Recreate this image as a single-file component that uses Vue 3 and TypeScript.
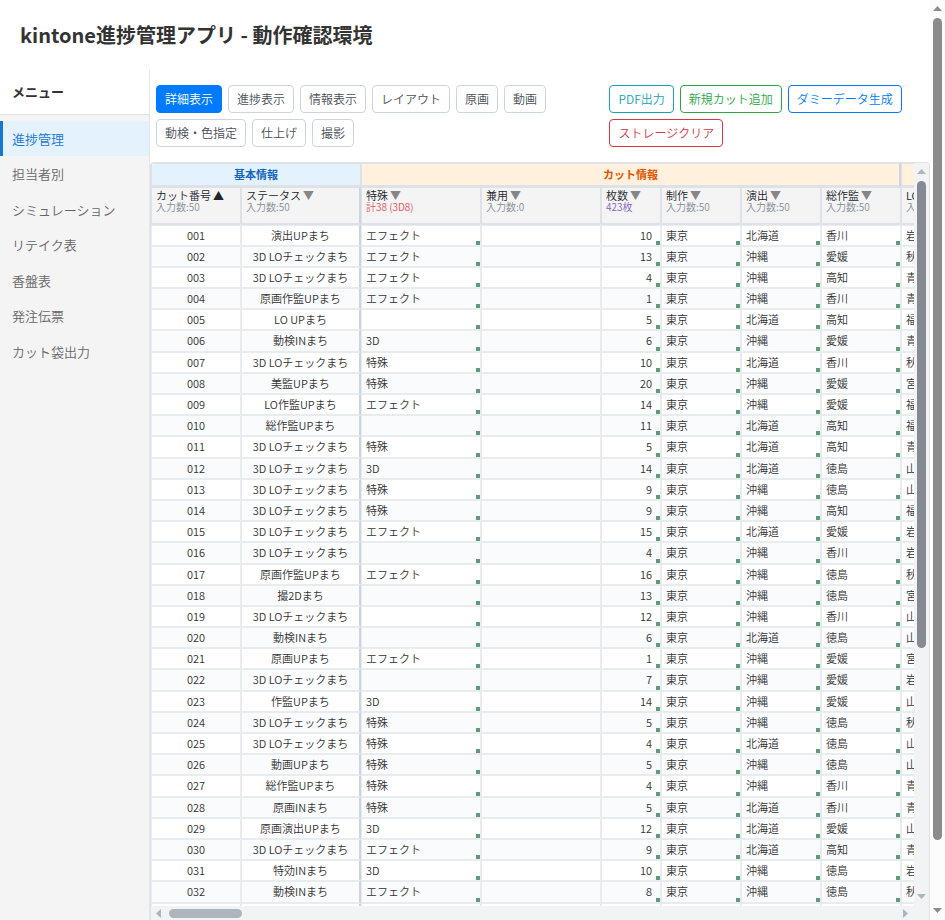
<script setup lang="ts">
import { ref } from 'vue'

interface Column {
  label: string
  note: string
  tone?: 'red' | 'purple'
  width: number
  sorted?: boolean
}

const menu = ['進捗管理', '担当者別', 'シミュレーション', 'リテイク表', '香盤表', '発注伝票', 'カット袋出力']
const activeMenu = ref(menu[0])

const views = ['詳細表示', '進捗表示', '情報表示', 'レイアウト', '原画', '動画', '動検・色指定', '仕上げ', '撮影']
const activeView = ref(views[0])

const actions = [
  { label: 'PDF出力', kind: 'info' },
  { label: '新規カット追加', kind: 'success' },
  { label: 'ダミーデータ生成', kind: 'primary' },
  { label: 'ストレージクリア', kind: 'danger' },
]

const columns: Column[] = [
  { label: 'カット番号', note: '入力数:50', width: 90, sorted: true },
  { label: 'ステータス', note: '入力数:50', width: 120 },
  { label: '特殊', note: '計38 (3D8)', tone: 'red', width: 120 },
  { label: '兼用', note: '入力数:0', width: 120 },
  { label: '枚数', note: '423枚', tone: 'purple', width: 60 },
  { label: '制作', note: '入力数:50', width: 80 },
  { label: '演出', note: '入力数:50', width: 80 },
  { label: '総作監', note: '入力数:50', width: 80 },
  { label: 'LO', note: '入力数:50', width: 80 },
]
const tableWidth = columns.reduce((sum, c) => sum + c.width, 0)

const lo = '3D LOチェックまち'
const fx = 'エフェクト'
type Row = [string, string, number, string, string, string]
const rows: Row[] = [
  ['演出UPまち', fx, 10, '北海道', '香川', '岩手'],
  [lo, fx, 13, '沖縄', '愛媛', '秋田'],
  [lo, fx, 4, '沖縄', '高知', '青森'],
  ['原画作監UPまち', fx, 1, '沖縄', '香川', '青森'],
  ['LO UPまち', '', 5, '北海道', '高知', '福島'],
  ['動検INまち', '3D', 6, '沖縄', '愛媛', '青森'],
  [lo, '特殊', 10, '北海道', '香川', '秋田'],
  ['美監UPまち', '特殊', 20, '沖縄', '愛媛', '宮城'],
  ['LO作監UPまち', fx, 14, '沖縄', '愛媛', '福島'],
  ['総作監UPまち', '', 11, '北海道', '高知', '福島'],
  [lo, '特殊', 5, '北海道', '高知', '青森'],
  [lo, '3D', 14, '北海道', '徳島', '山形'],
  [lo, '特殊', 9, '沖縄', '徳島', '山形'],
  [lo, '特殊', 9, '沖縄', '高知', '福島'],
  [lo, fx, 15, '北海道', '愛媛', '岩手'],
  [lo, '', 4, '沖縄', '香川', '岩手'],
  ['原画作監UPまち', fx, 16, '沖縄', '徳島', '秋田'],
  ['撮2Dまち', '', 13, '沖縄', '徳島', '宮城'],
  [lo, '', 12, '沖縄', '香川', '山形'],
  ['動検INまち', '', 6, '北海道', '徳島', '山形'],
  ['原画UPまち', fx, 1, '沖縄', '愛媛', '宮城'],
  [lo, '', 7, '沖縄', '愛媛', '岩手'],
  ['作監UPまち', '3D', 14, '沖縄', '愛媛', '山形'],
  [lo, '特殊', 5, '沖縄', '徳島', '秋田'],
  [lo, '特殊', 4, '北海道', '徳島', '山形'],
  ['動画UPまち', '特殊', 5, '沖縄', '徳島', '山形'],
  ['総作監UPまち', '特殊', 4, '沖縄', '香川', '青森'],
  ['原画INまち', '特殊', 5, '北海道', '香川', '青森'],
  ['原画演出UPまち', '3D', 12, '北海道', '愛媛', '山形'],
  [lo, fx, 9, '北海道', '高知', '青森'],
  ['特効INまち', '3D', 10, '沖縄', '徳島', '岩手'],
  ['動検INまち', fx, 8, '沖縄', '徳島', '秋田'],
  [lo, '特殊', 8, '沖縄', '香川', '岩手'],
]
const cutNumber = (index: number) => String(index + 1).padStart(3, '0')
</script>

<template>
  <div class="window">
    <div class="page">
      <header class="page-header">
        <h1>kintone進捗管理アプリ - 動作確認環境</h1>
      </header>

      <div class="layout">
        <nav class="sidebar" aria-label="メニュー">
          <h2>メニュー</h2>
          <ul>
            <li v-for="item in menu" :key="item">
              <a href="#" :class="{ active: item === activeMenu }" @click.prevent="activeMenu = item">{{ item }}</a>
            </li>
          </ul>
        </nav>

        <main class="main">
          <div class="toolbar">
            <div class="button-group">
              <button
                v-for="view in views"
                :key="view"
                type="button"
                class="btn"
                :class="{ active: view === activeView }"
                @click="activeView = view"
              >{{ view }}</button>
            </div>
            <div class="button-group">
              <button v-for="a in actions" :key="a.label" type="button" class="btn" :class="a.kind">{{ a.label }}</button>
            </div>
          </div>

          <section class="grid-frame">
            <div class="table-view">
              <table :style="{ width: tableWidth + 'px' }">
                <colgroup>
                  <col v-for="c in columns" :key="c.label" :style="{ width: c.width + 'px' }" />
                </colgroup>
                <thead>
                  <tr class="groups">
                    <th colspan="2" scope="colgroup" class="basic">基本情報</th>
                    <th colspan="6" scope="colgroup" class="cut">カット情報</th>
                    <td class="cut"></td>
                  </tr>
                  <tr class="heads">
                    <th v-for="(c, i) in columns" :key="c.label" scope="col" :class="{ divider: i === 1 }">
                      <button type="button" class="sort">
                        {{ c.label }}<span class="arrow" :class="{ on: c.sorted }">{{ c.sorted ? '▲' : '▼' }}</span>
                      </button>
                      <div class="note" :class="c.tone">{{ c.note }}</div>
                    </th>
                  </tr>
                </thead>
                <tbody>
                  <tr v-for="(r, i) in rows" :key="i">
                    <td class="center">{{ cutNumber(i) }}</td>
                    <td class="center divider">{{ r[0] }}</td>
                    <td class="editable">{{ r[1] }}</td>
                    <td></td>
                    <td class="editable number">{{ r[2] }}</td>
                    <td class="editable">東京</td>
                    <td class="editable">{{ r[3] }}</td>
                    <td class="editable">{{ r[4] }}</td>
                    <td class="editable">{{ r[5] }}</td>
                  </tr>
                </tbody>
              </table>
            </div>
            <div class="bar vertical inner" aria-hidden="true">
              <svg viewBox="0 0 15 15"><path d="M3 11 7.500 6 12 11z" /></svg>
              <div class="track"><div class="thumb"></div></div>
              <svg viewBox="0 0 15 15"><path d="M3 3 7.500 8 12 3z" /></svg>
            </div>
            <div class="bar horizontal inner" aria-hidden="true">
              <svg viewBox="0 0 15 15"><path d="M10 3 5 7.500 10 12z" /></svg>
              <div class="track"><div class="thumb"></div></div>
              <svg viewBox="0 0 15 15"><path d="M4 3 9 7.500 4 12z" /></svg>
            </div>
            <div class="corner"></div>
          </section>
        </main>
      </div>
    </div>

    <div class="bar vertical outer" aria-hidden="true">
      <svg viewBox="0 0 15 15"><path d="M3 11 7.500 6 12 11z" /></svg>
      <div class="track"><div class="thumb"></div></div>
      <svg viewBox="0 0 15 15"><path d="M3 3 7.500 8 12 3z" /></svg>
    </div>
  </div>
</template>

<style>
body {
  margin: 0;
  background: #fff;
}
</style>

<style scoped>
* {
  box-sizing: border-box;
}

.window {
  display: flex;
  height: 100vh;
  overflow: hidden;
  font-family: 'Noto Sans CJK JP', sans-serif;
  font-weight: 350;
  color: #333;
}

.page {
  flex: 1;
  min-width: 0;
  display: flex;
  flex-direction: column;
}

.page-header {
  padding: 20px;
}

h1 {
  margin: 0;
  font-size: 20px;
  line-height: 30px;
  font-weight: 700;
}

.layout {
  flex: 1;
  min-height: 0;
  display: flex;
}

.sidebar {
  flex: 0 0 150px;
  background: #f4f4f4;
  border-right: 1px solid #e3e6ea;
  font-size: 13px;
  line-height: 1.5;
}

.sidebar h2 {
  margin: 0;
  padding: 12px;
  background: #fff;
  border-bottom: 1px solid #e0e0e0;
  font-size: 13px;
  font-weight: 700;
}

.sidebar ul {
  list-style: none;
  margin: 0;
  padding: 6px 0;
}

.sidebar a {
  display: block;
  padding: 8px 12px;
  color: #666;
  text-decoration: none;
}

.sidebar a.active {
  padding-left: 9px;
  border-left: 3px solid #1976d2;
  background: #e3f2fd;
  color: #1976d2;
}

.main {
  flex: 1;
  min-width: 0;
  display: flex;
  flex-direction: column;
}

.toolbar {
  display: flex;
  padding: 15px 6px;
}

.button-group {
  display: flex;
  flex-wrap: wrap;
  align-content: flex-start;
  gap: 6px;
}

.btn {
  height: 28px;
  padding: 0 8px;
  border: 1px solid #ced4da;
  border-radius: 4px;
  background: #fff;
  color: #495057;
  font-family: inherit;
  font-size: 12px;
  font-weight: inherit;
  line-height: 18px;
  white-space: nowrap;
}

.btn.active {
  background: #007bff;
  border-color: #007bff;
  color: #fff;
}

.btn.info {
  border-color: #17a2b8;
  color: #17a2b8;
}

.btn.success {
  border-color: #28a745;
  color: #28a745;
}

.btn.primary {
  border-color: #007bff;
  color: #007bff;
}

.btn.danger {
  border-color: #dc3545;
  color: #dc3545;
}

.grid-frame {
  flex: 1;
  min-height: 0;
  display: grid;
  grid-template-columns: minmax(0, 1fr) 15px;
  grid-template-rows: minmax(0, 1fr) 14px;
  border: 1px solid #dee2e6;
  border-bottom: 0;
  border-radius: 4px 4px 0 0;
  overflow: hidden;
}

.table-view {
  overflow: hidden;
}

table {
  table-layout: fixed;
  border-collapse: separate;
  border-spacing: 0;
  font-size: 11px;
  line-height: 1.2;
}

th,
td {
  position: relative;
  padding: 3px 4px;
  border: 1px solid #e9ecef;
  text-align: left;
  white-space: nowrap;
}

tbody td {
  height: 21px;
}

thead th,
thead td {
  border-color: #dee2e6;
  border-bottom-width: 2px;
}

.groups th,
.groups td {
  height: 24px;
  padding: 0 4px;
  text-align: center;
  font-weight: 700;
}

.groups .basic {
  background: #e3f2fd;
  color: #1565c0;
}

.groups .cut {
  background: #fff1de;
  color: #e65100;
}

.groups th.cut {
  border-right: 2px solid #ced4da;
}

.heads th {
  padding: 2px 4px 12px;
  background: #f4f4f4;
  font-weight: inherit;
  vertical-align: top;
}

.sort {
  display: block;
  padding: 0;
  border: 0;
  background: none;
  color: #212529;
  font: inherit;
  line-height: 1.05;
}

.arrow {
  margin-left: 2px;
  color: #868686;
}

.arrow.on {
  color: #212529;
}

.note {
  color: #868e96;
  font-size: 10px;
  line-height: 9px;
}

.note.red {
  color: #e8505b;
}

.note.purple {
  color: #845ec2;
}

tbody tr:nth-child(even) {
  background: #fafbfc;
}

th.divider,
td.divider {
  border-right: 2px solid #ced4da;
}

.center {
  text-align: center;
}

.number {
  padding-right: 8px;
  text-align: right;
}

.editable::after {
  content: '';
  position: absolute;
  right: 0;
  bottom: 0;
  width: 4px;
  height: 4px;
  background: #5f9b7b;
}

.bar {
  display: flex;
}

.bar svg {
  flex: none;
  width: 15px;
  height: 15px;
  fill: currentColor;
}

.track {
  flex: 1;
  min-width: 0;
  min-height: 0;
  padding: 3px;
}

.thumb {
  border-radius: 5px;
}

.vertical {
  flex-direction: column;
}

.vertical .thumb {
  width: 9px;
}

.horizontal .thumb {
  width: 10%;
  height: 9px;
}

.inner,
.corner {
  background: #f1f3f5;
}

.inner {
  color: #adb5bd;
}

.inner.vertical .thumb {
  height: 66%;
  background: #868a93;
}

.inner.horizontal .thumb {
  background: #adb5bd;
}

.outer {
  flex: 0 0 15px;
  background: #fcfcfc;
  color: #8b8b8b;
}

.outer .thumb {
  height: 93%;
  background: #8b8b8b;
}
</style>
